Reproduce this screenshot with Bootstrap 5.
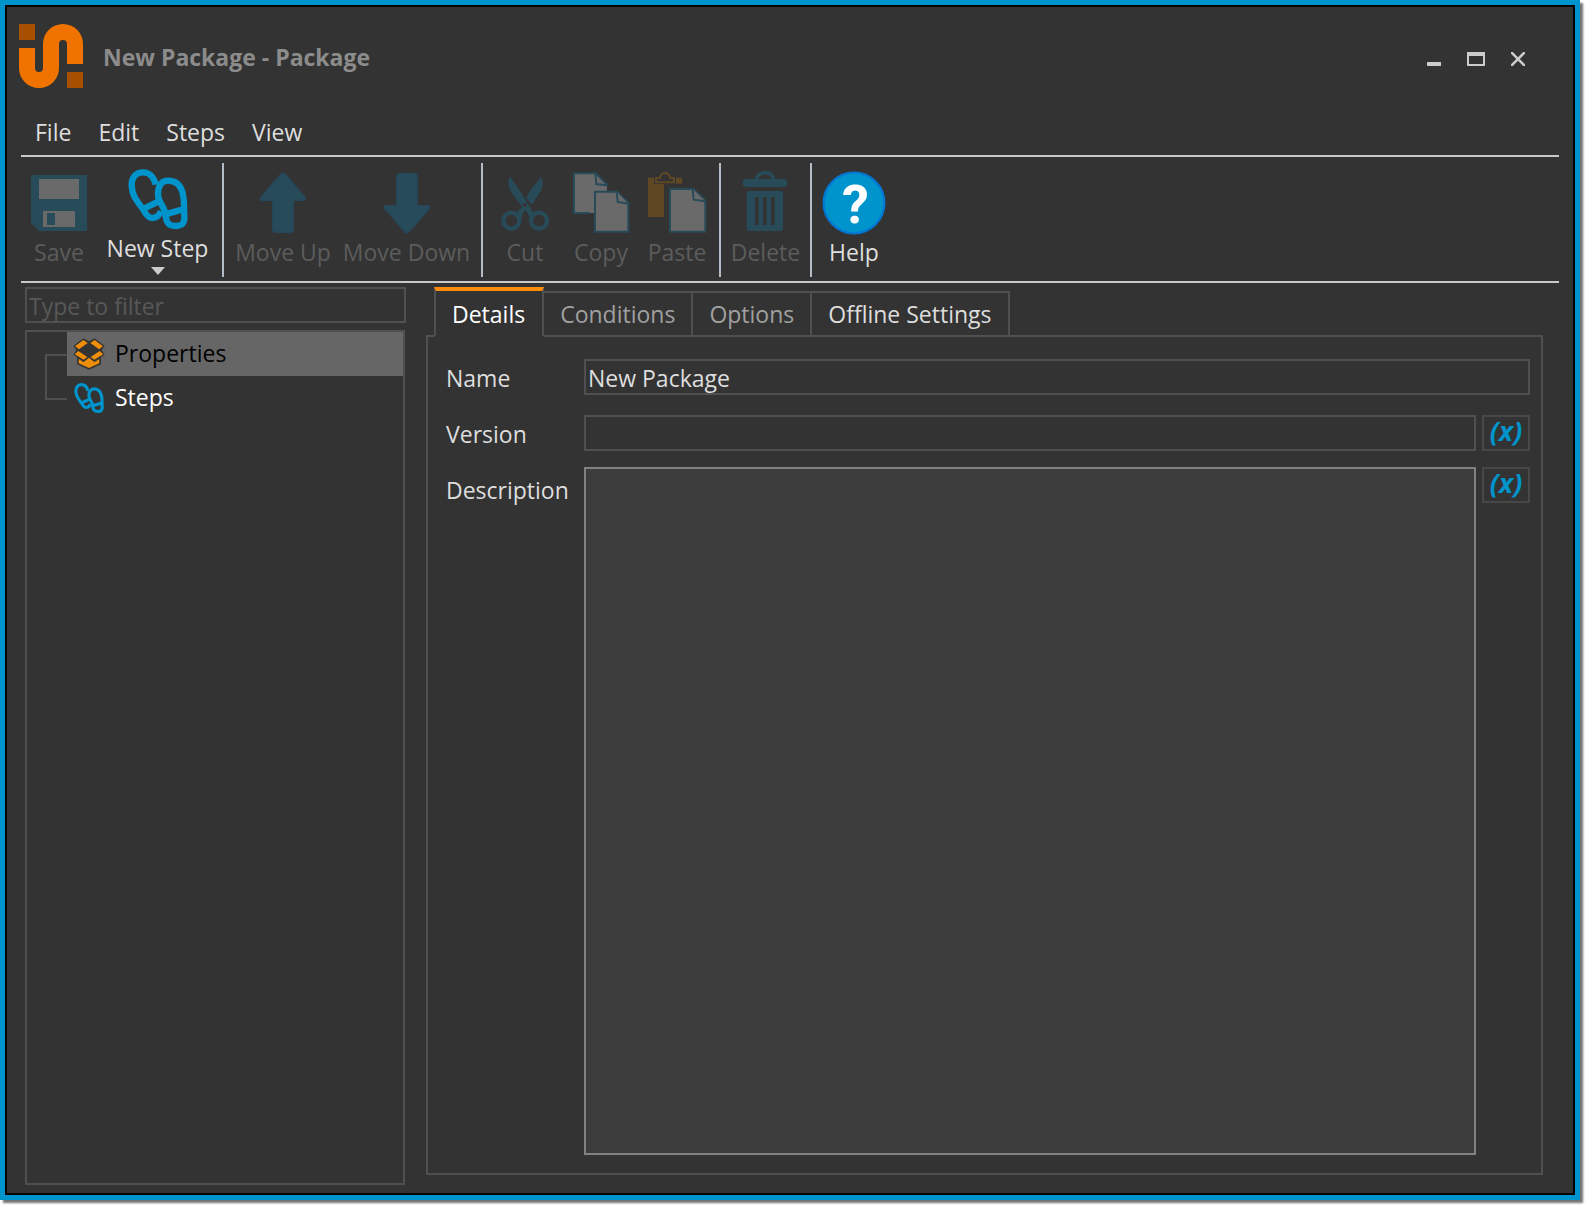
<!DOCTYPE html>
<html lang="en">
<head>
<meta charset="utf-8">
<meta name="viewport" content="width=device-width, initial-scale=1">
<title>New Package - Package</title>
<link href="https://cdn.jsdelivr.net/npm/bootstrap@5.3.0/dist/css/bootstrap.min.css" rel="stylesheet">
<style>
:root{--ink:#dedede;--line:#505050;--rule:#c8c8c8;--blue:#0094cc;--page:#333}
body{font-family:"Open Sans","Noto Sans",sans-serif;font-size:23px;line-height:28px;color:var(--ink);background:#fff;padding:0 10px 10px 0}
.app-window{background:var(--page);border:5px solid var(--blue);outline:2px solid #000;outline-offset:-7px;box-shadow:3px 3px 2px rgba(0,0,0,.55);padding:2px}
.title-bar{padding:17px 34px 0 12px;height:98px}
.title-text{font-size:23px;font-weight:700;line-height:28px;color:#8c8c8c;margin:2px 0 0 20px}
.win-set{padding-top:15px}
.win-btn{width:42px;height:34px;padding:0;border:0;background:none;color:#ccc}
.menu-row{padding:4px 28px 0;height:50px;gap:27px;align-items:center}
.menu-row a{color:var(--ink);text-decoration:none}
.tool-row{margin:0 14px;border-top:2px solid var(--rule);border-bottom:2px solid var(--rule);height:128px}
.tool-group{padding:14px 0 0}
.move-group{padding-right:10px}
.tool-rule{width:2px;background:#b4bcc8;margin:6px 0 4px}
.tool-btn{border:0;background:none;padding:0;color:var(--ink);white-space:nowrap;display:flex;flex-direction:column;align-items:center}
.tool-btn:disabled{color:#5c5c5c}
.tool-btn svg{margin-bottom:3px;flex:none}
.w-a{width:68px}.w-b{width:129px}.w-c{width:118px}.w-d{width:76px}.w-e{width:89px}.w-f{width:84px}
.tool-btn.has-menu{margin-top:-4px}
.tool-btn .drop{margin:5px 0 0}
.work-area{min-height:0}
.side-col{width:381px;flex:none;margin:0 20px 0 18px}
.main-col{margin:0 30px 18px 0;min-width:0}
.field{background:var(--page);border:2px solid var(--line);border-radius:0;color:var(--ink);height:36px;padding:2px 2px 0;min-width:0;outline:0}
.field::placeholder{color:#585858;opacity:1}
.tree-box{border:2px solid var(--line);margin:7px 1px 0 0}
.branch{width:22px;height:46px;margin:22px 0 0 18px;border:2px solid var(--line);border-right:0;flex:none}
.tree-row{height:44px;padding:0 0 0 6px;gap:10px;color:#fff;text-decoration:none}
.tree-row span{padding-bottom:2px}
.tree-row.current{background:#666;color:#000}
.tab-strip{padding-left:8px;align-items:flex-end;position:relative;z-index:1;margin-bottom:-2px}
.tab-btn{border:2px solid var(--line);border-left:0;background:var(--page);color:var(--ink);height:46px;padding:0 16px;white-space:nowrap}
.tab-btn.is-on{height:50px;border-left:2px solid var(--line);border-top:4px solid #ff8c0a;border-bottom-color:var(--page);color:#fff;padding:2px 17px 0 16px}
.tab-btn.is-dim{color:#a0a0a0}
.pane{border:2px solid var(--line);padding:22px 11px 18px 18px}
.form-grid{display:grid;grid-template-columns:138px minmax(0,1fr) 48px;grid-template-rows:36px 36px minmax(0,1fr);row-gap:20px}
.form-grid label{padding-top:5px}
.form-grid .field{width:100%}
.span-two{grid-column:span 2}
.area-box{background:#3c3c3c;border:2px solid #828282;color:var(--ink);resize:none;outline:0;display:block;padding:2px}
.raise{margin-top:-4px}
.var-btn{height:36px;width:48px;border:2px solid #484848;background:var(--page);color:var(--blue);font-size:27px;font-weight:700;font-style:italic;line-height:28px;padding:0 0 4px}
.gap-r{padding-right:6px}
</style>
<script src="https://cdn.jsdelivr.net/npm/bootstrap@5.3.0/dist/js/bootstrap.bundle.min.js"></script>
</head>
<body class="vh-100">
<svg width="0" height="0" class="position-absolute" aria-hidden="true">
  <symbol id="feet" viewBox="379 51 192 192">
    <g fill="none" stroke="#0094cc" stroke-width="19" stroke-linejoin="round">
      <path d="M484 184C478 198 470 204 458 204C446 204 438 193 431 179C414 155 398 140 396 108C395 86 406 67 430 67C448 67 463 80 468 104M430 177L476 155"/>
      <path d="M505 92C484 92 474 110 475 135C476 158 494 168 497 192C500 214 503 228 528 228C549 228 556 218 554 196C552 174 556 158 549 130C543 105 528 92 505 92ZM497 193L553 177"/>
    </g>
  </symbol>
</svg>
<main class="app-window h-100 d-flex flex-column">
  <header class="title-bar d-flex justify-content-between align-items-start">
    <div class="d-flex align-items-center">
      <svg width="64" height="64" viewBox="0 0 64 64" aria-hidden="true">
        <path fill="#a85000" d="M0 0h16v16H0zM48 48h16v16H48z"/>
        <path fill="#f07300" d="M0 24h16v20a4 4 0 0 0 8 0V20a20 20 0 0 1 40 0v20H48V20a4 4 0 0 0-8 0v24a20 20 0 0 1-40 0z"/>
      </svg>
      <h1 class="title-text">New Package - Package</h1>
    </div>
    <div class="win-set d-flex">
      <button class="win-btn" type="button" aria-label="Minimize"><svg width="18" height="14"><path fill="#ccc" d="M2 10h14v4H2z"/></svg></button>
      <button class="win-btn" type="button" aria-label="Maximize"><svg width="18" height="14"><path fill="#ccc" fill-rule="evenodd" d="M0 0h18v14H0zM2 4v8h14V4z"/></svg></button>
      <button class="win-btn" type="button" aria-label="Close"><svg width="14" height="14"><path stroke="#ccc" stroke-width="2.6" d="M0 0l14 14M14 0L0 14"/></svg></button>
    </div>
  </header>
  <nav class="menu-row d-flex" aria-label="Menu">
    <a href="#">File</a><a href="#">Edit</a><a href="#">Steps</a><a href="#">View</a>
  </nav>
  <div class="tool-row d-flex" role="toolbar" aria-label="Tools">
    <div class="tool-group d-flex align-items-start ps-1">
      <button class="tool-btn w-a" type="button" disabled>
        <svg width="64" height="64" viewBox="-4 -4 64 64"><path fill="#284b5a" d="M0 0h56v56H8l-8-8z"/><path fill="#6a6a6a" d="M8 4h40v20H8zM12 36h32v16H12z"/><path fill="#284b5a" d="M16 38h8v12h-8z"/></svg>
        <span>Save</span></button>
      <button class="tool-btn w-b has-menu" type="button">
        <svg width="64" height="64"><use href="#feet"/></svg>
        <span>New Step</span>
        <svg class="drop" width="14" height="8"><path fill="#ccc" d="M0 0h14L7 8z"/></svg></button>
    </div>
    <div class="tool-rule"></div>
    <div class="tool-group move-group d-flex align-items-start">
      <button class="tool-btn w-c" type="button" disabled>
        <svg width="64" height="64" viewBox="92 63 192 192"><path fill="#284b5a" stroke="#26465a" stroke-width="4" d="M181 73q7-5 14 0l60 70q2 8-4 8h-32v86q0 10-10 10h-42q-10 0-10-10v-86h-32q-6 0-4-8z"/></svg>
        <span>Move Up</span></button>
      <button class="tool-btn w-b" type="button" disabled>
        <svg width="64" height="64" viewBox="465 63 192 192"><path fill="#284b5a" stroke="#26465a" stroke-width="4" d="M568 245q-7 5-14 0l-60-70q-2-8 4-8h32V81q0-10 10-10h42q10 0 10 10v86h32q6 0 4 8z"/></svg>
        <span>Move Down</span></button>
    </div>
    <div class="tool-rule"></div>
    <div class="tool-group d-flex align-items-start px-1">
      <button class="tool-btn w-d" type="button" disabled>
        <svg width="64" height="64" viewBox="39 63 192 192"><g fill="none" stroke="#284b5a" stroke-width="13"><circle cx="94" cy="212" r="24"/><circle cx="177" cy="212" r="24"/></g>
          <path fill="#284b5a" d="M91 81C104 101 133 140 146 166L161 190L149 206C146 192 140 184 134 180C130 186 126 194 126 206L112 190C112 182 119 180 122 178L126 170C108 142 70 110 91 81ZM182 81C191 93 190 108 182 123L156 164L139 144C151 118 172 98 182 81Z"/><circle cx="135" cy="165" r="6" fill="#333"/></svg>
        <span>Cut</span></button>
      <button class="tool-btn w-d" type="button" disabled>
        <svg width="64" height="64" viewBox="265 63 192 192"><g fill="#6a6a6a" stroke="#284b5a" stroke-width="6"><path stroke="none" d="M279 69h66l34 34v86H279z"/><path fill="none" d="M328 189H280V70h65l34 34v2l-32-4-3-31"/><path d="M343 125h66l34 34v86H343z"/><path d="M408 125l3 31 32 5"/></g></svg>
        <span>Copy</span></button>
      <button class="tool-btn w-d" type="button" disabled>
        <svg width="64" height="64" viewBox="492 63 192 192"><path fill="#604824" d="M501 83h18v19h30v99h-48zM585 83h18v18h-18z"/><path fill="none" stroke="#604824" stroke-width="6" d="M525 97V84h11q5-15 16-15t16 15h11v13z"/><g fill="#6a6a6a" stroke="#284b5a" stroke-width="6"><path d="M567 117h70l36 34v94H567z"/><path d="M635 117l3 32 35 5"/></g></svg>
        <span>Paste</span></button>
    </div>
    <div class="tool-rule"></div>
    <div class="tool-group d-flex align-items-start">
      <button class="tool-btn w-e" type="button" disabled>
        <svg width="64" height="64" viewBox="97 63 192 192"><path fill="none" stroke="#284b5a" stroke-width="11" d="M164 90a26 22 0 0 1 52 0"/><rect x="123" y="87" width="134" height="24" rx="12" fill="#284b5a"/><rect x="135" y="123" width="109" height="120" rx="8" fill="#284b5a"/><path fill="#333" d="M160 141h11v84h-11zM184 141h11v84h-11zM208 141h11v84h-11z"/></svg>
        <span>Delete</span></button>
    </div>
    <div class="tool-rule"></div>
    <div class="tool-group d-flex align-items-start">
      <button class="tool-btn w-f" type="button">
        <svg width="64" height="64" viewBox="364 63 192 192"><circle cx="460" cy="159" r="91" fill="#0094cc" stroke="#0078d2" stroke-width="7"/><text x="464" y="219" text-anchor="middle" font-family="Roboto, sans-serif" font-weight="700" font-size="162" fill="#fff" aria-hidden="true">?</text></svg>
        <span>Help</span></button>
    </div>
  </div>
  <div class="work-area d-flex flex-grow-1 pt-1">
    <aside class="side-col d-flex flex-column pb-2">
      <input class="field w-100" type="search" placeholder="Type to filter" aria-label="Type to filter">
      <div class="tree-box d-flex flex-grow-1 align-items-start">
        <div class="branch"></div>
        <nav class="flex-grow-1" aria-label="Package tree">
          <a class="tree-row current d-flex align-items-center" href="#" aria-current="page">
            <svg width="32" height="32" viewBox="219 204 96 96"><path fill="#333" d="M250 205L267 214L284 205L314 228L305 240L314 254L303 262V283L267 299L231 283V262L220 254L229 240L220 228Z"/><path fill="#ee8e08" d="M250 210l13 9-26 19-12-9zM284 210l25 19-12 9-26-19zM235 243l27 18-11 8-27-16zM299 243l11 10-27 16-11-8zM236 267l15 9 16-13 16 13 15-9v13l-31 14-31-14z"/></svg>
            <span>Properties</span></a>
          <a class="tree-row d-flex align-items-center" href="#"><svg width="32" height="32"><use href="#feet"/></svg><span>Steps</span></a>
        </nav>
      </div>
    </aside>
    <section class="d-flex flex-column flex-grow-1 main-col">
      <div class="tab-strip d-flex" role="tablist">
        <button class="tab-btn is-on" type="button" role="tab" aria-selected="true">Details</button>
        <button class="tab-btn is-dim" type="button" role="tab">Conditions</button>
        <button class="tab-btn is-dim" type="button" role="tab">Options</button>
        <button class="tab-btn" type="button" role="tab">Offline Settings</button>
      </div>
      <form class="pane form-grid flex-grow-1">
        <label for="pkgName">Name</label>
        <div class="span-two"><input class="field" id="pkgName" type="text" value="New Package"></div>
        <label for="pkgVersion">Version</label>
        <div class="gap-r"><input class="field" id="pkgVersion" type="text"></div>
        <button class="var-btn" type="button" aria-label="Version variable">(x)</button>
        <label for="pkgDesc">Description</label>
        <div class="gap-r raise d-flex"><textarea class="area-box w-100" id="pkgDesc"></textarea></div>
        <button class="var-btn raise" type="button" aria-label="Description variable">(x)</button>
      </form>
    </section>
  </div>
</main>
</body>
</html>
